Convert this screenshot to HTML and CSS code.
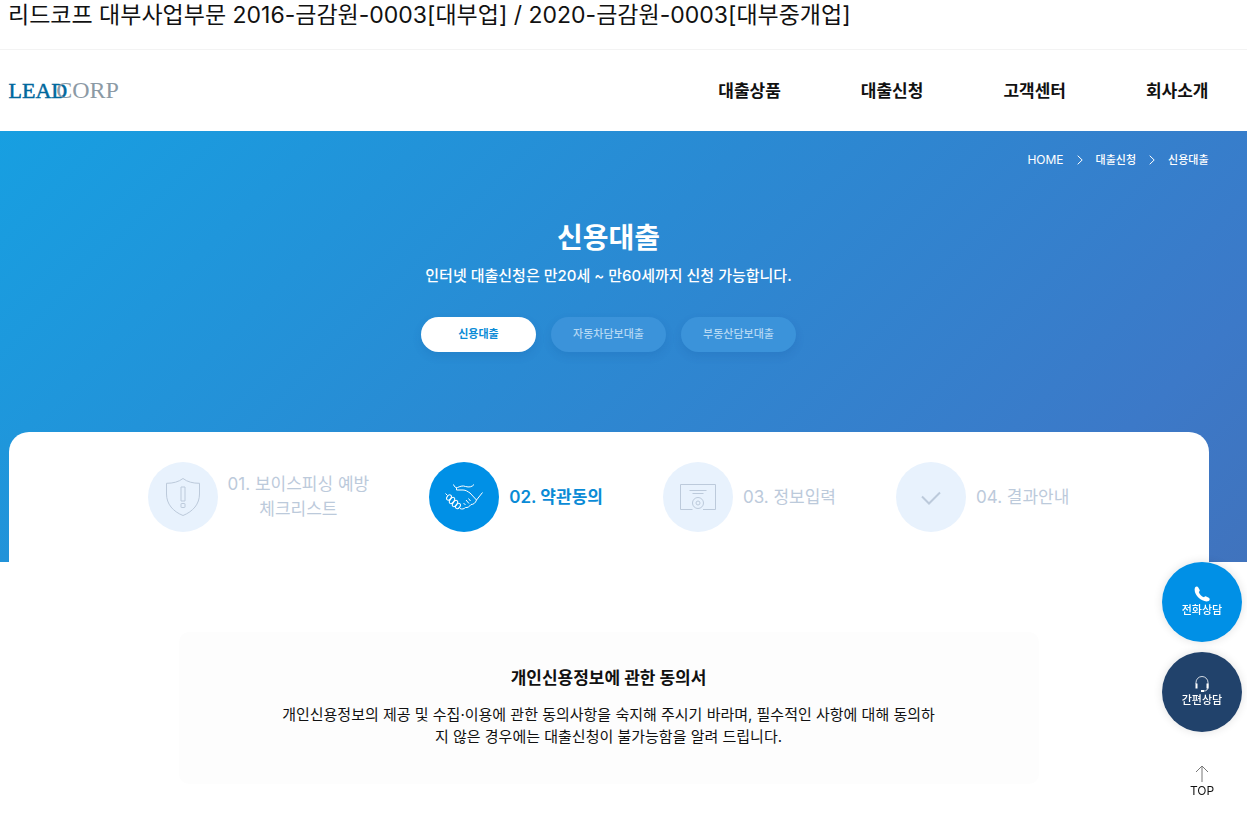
FILE: index.html
```html
<!DOCTYPE html>
<html lang="ko">
<head>
<meta charset="utf-8">
<meta name="viewport" content="width=device-width, initial-scale=1">
<title>신용대출 | 리드코프</title>
<link rel="stylesheet" href="styles.css">
</head>
<body>
<p class="notice">리드코프 대부사업부문 2016-금감원-0003[대부업] / 2020-금감원-0003[대부중개업]</p>

<header class="header">
  <div class="container header-row">
    <a class="logo" href="#"><span class="logo-lead">LEAD</span><span class="logo-corp">CORP</span></a>
    <nav class="nav">
      <a href="#">대출상품</a>
      <a href="#">대출신청</a>
      <a href="#">고객센터</a>
      <a href="#">회사소개</a>
    </nav>
  </div>
</header>

<section class="hero">
  <div class="container">
    <nav class="crumbs">
      <a class="crumb-home" href="#">HOME</a>
      <svg width="6" height="10" viewBox="0 0 6 10"><path d="M.7.7 5.2 5 .7 9.3"/></svg>
      <a href="#">대출신청</a>
      <svg width="6" height="10" viewBox="0 0 6 10"><path d="M.7.7 5.2 5 .7 9.3"/></svg>
      <a href="#">신용대출</a>
    </nav>
    <h1 class="title">신용대출</h1>
    <p class="subtitle">인터넷 대출신청은 만20세 ~ 만60세까지 신청 가능합니다.</p>
    <div class="tabs">
      <a class="tab tab-on" href="#">신용대출</a>
      <a class="tab" href="#">자동차담보대출</a>
      <a class="tab" href="#">부동산담보대출</a>
    </div>
    <ol class="steps">
      <li class="step">
        <span class="step-icon">
          <svg width="36" height="40" viewBox="0 0 36 40"><path d="M18 1.5C13.5 5 8 6.3 1.500 6.300V17C1.500 27 8 34.500 18 38.500 28 34.500 34.500 27 34.500 17V6.300C28 6.300 22.500 5 18 1.500Z"/><path d="M16 10h4v14h-4zM16.500 26.500h3a.5.5 0 0 1 .5.500v3a.5.5 0 0 1-.5.500h-3a.5.5 0 0 1-.5-.5v-3a.5.5 0 0 1 .5-.5z"/></svg>
        </span>
        <span class="step-text">01. 보이스피싱 예방<br>체크리스트</span>
      </li>
      <li class="step step-on">
        <span class="step-icon">
          <svg width="40" height="30" viewBox="0 0 40 30"><path d="M9.500 2.500C10.500 5 11.500 6 13.500 5.500 17 4 19 3.500 21.500 4.500 25 5.500 28 5 30 2.500M12.500 6v2h6.500c3 0 4.500 1.500 7 3l6.500 7L38.500 10.500"/><path d="M32.500 18c-1 3-3 4.500-5.500 4.500-1.500 2-3.500 3.500-5.500 3-1.500 1.500-3.500 2-5.500 1M19.500 21l2 2M22 18l3 3.500M24.500 16.500l2 2.500M1.500 11.500 3.500 13.500"/><ellipse cx="5" cy="15.500" rx="2" ry="3" transform="rotate(35 5 15.500)"/><ellipse cx="8" cy="18.500" rx="2" ry="3.500" transform="rotate(35 8 18.500)"/><ellipse cx="11" cy="21.500" rx="2" ry="3.500" transform="rotate(35 11 21.500)"/><ellipse cx="14" cy="24" rx="2" ry="3" transform="rotate(35 14 24)"/></svg>
        </span>
        <span class="step-text">02. 약관동의</span>
      </li>
      <li class="step">
        <span class="step-icon">
          <svg width="36" height="28" viewBox="0 0 36 28"><path d="M12.500 26.500H.5V1.500h35v25H23M9.500 7.500h17M12.500 10.500h11"/><circle cx="18" cy="20" r="5.500"/><circle cx="18" cy="20" r="2"/></svg>
        </span>
        <span class="step-text">03. 정보입력</span>
      </li>
      <li class="step">
        <span class="step-icon">
          <svg class="check" width="20" height="14" viewBox="0 0 20 14"><path d="M1 5.500 8 12.500 19 1.500"/></svg>
        </span>
        <span class="step-text">04. 결과안내</span>
      </li>
    </ol>
  </div>
</section>

<main class="content">
  <section class="agree">
    <h2>개인신용정보에 관한 동의서</h2>
    <p>개인신용정보의 제공 및 수집·이용에 관한 동의사항을 숙지해 주시기 바라며, 필수적인 사항에 대해 동의하지 않은 경우에는 대출신청이 불가능함을 알려 드립니다.</p>
  </section>
</main>

<aside class="quick">
  <a class="quick-item quick-call" href="#">
    <svg width="16" height="16" viewBox="0 0 16 16"><path fill="#fff" d="M1 1.500C2 .2 3.600.2 4.300 1.400L5.700 4C6 4.800 5.400 5.400 4.800 6 5.600 8.500 7.500 10.400 10 11.300 10.700 10.500 11.300 10 12.200 10.400L14.800 11.800C16.200 12.700 15.800 14 14.800 15 9 17.500-1.500 9 1 1.500Z"/></svg>
    전화상담
  </a>
  <a class="quick-item quick-simple" href="#">
    <svg width="16" height="16" viewBox="0 0 16 16"><path fill="none" stroke="#fff" stroke-opacity=".8" d="M2 8V6.500a6 6 0 0 1 12 0V11c0 2.500-1.500 4-4 4"/><path fill="none" stroke="#fff" stroke-width="2" d="M2.500 7.500v5M13.500 7.500v5M7 15h3"/></svg>
    간편상담
  </a>
  <a class="quick-top" href="#">
    <svg width="14" height="17" viewBox="0 0 14 17"><path fill="none" stroke="#777" d="M7 17V1M1 7l6-6 6 6"/></svg>
    TOP
  </a>
</aside>
</body>
</html>
```
FILE: styles.css
```css
* { box-sizing: border-box; }
body {
  margin: 0;
  background: #fff;
  color: #111;
  font-family: Inter, "Noto Sans CJK KR", sans-serif;
  font-size: 15px;
}
a { color: inherit; text-decoration: none; }
h1, h2, p, ol { margin: 0; padding: 0; }

.notice {
  height: 50px;
  padding-left: 8px;
  border-bottom: 1px solid #f3f3f3;
  font-size: 23px;
  line-height: 30px;
}

.header, .hero, .content { padding-right: 30px; }
.container { max-width: 1200px; margin: 0 auto; }

.header-row {
  display: flex;
  align-items: center;
  justify-content: space-between;
  height: 81px;
}
.logo { display: flex; align-items: baseline; font-family: "Liberation Serif", serif; line-height: 24px; }
.logo-lead { color: #00689d; font-size: 22px; -webkit-text-stroke: 0.5px #00689d; }
.logo-corp { margin-left: -11px; color: #8c9aa5; font-size: 24px; }
.nav { display: flex; gap: 80px; font-size: 17px; font-weight: 700; line-height: 26px; }

.hero {
  background: linear-gradient(135deg, #179fe1 0%, #2a8ad3 45%, #3c79c8 85%, #4073bd 100%);
  color: #fff;
  text-align: center;
}
.crumbs {
  display: flex;
  justify-content: flex-end;
  align-items: center;
  gap: 13px;
  padding-top: 20px;
  font-size: 11px;
  font-weight: 500;
  line-height: 18px;
}
.crumb-home { font-size: 12px; font-weight: 400; }
.crumbs svg { fill: none; stroke: #fff; }
.title { margin-top: 47px; font-size: 28px; font-weight: 700; line-height: 44px; }
.subtitle { margin-top: 4px; font-weight: 500; line-height: 24px; }
.tabs { display: flex; justify-content: center; gap: 15px; margin-top: 29px; }
.tab {
  width: 115px;
  border-radius: 18px;
  background: #3b93da;
  box-shadow: 0 4px 10px rgba(0, 60, 130, 0.12);
  color: #b4d8f4;
  font-size: 11px;
  font-weight: 500;
  line-height: 35px;
}
.tab-on { background: #fff; color: #0a8bd6; font-weight: 600; }

.steps {
  display: flex;
  justify-content: center;
  gap: 60px;
  margin-top: 80px;
  padding: 30px 0;
  border-radius: 20px 20px 0 0;
  background: #fff;
  list-style: none;
}
.step {
  display: flex;
  align-items: center;
  gap: 10px;
  color: #bccadb;
  font-size: 17px;
  font-weight: 400;
  line-height: 25px;
}
.step-icon {
  display: flex;
  align-items: center;
  justify-content: center;
  width: 70px;
  height: 70px;
  border-radius: 50%;
  background: #e8f2fd;
}
.step-icon svg { fill: none; stroke: #bccadb; }
.step-icon .check { margin-top: 2px; stroke-width: 2; }
.step-on { color: #0a8bd6; font-weight: 600; }
.step-on .step-icon { background: #0090e6; }
.step-on .step-icon svg { stroke: #fff; }

.content { padding-top: 70px; padding-bottom: 33px; }
.agree {
  max-width: 860px;
  margin: 0 auto;
  padding: 33px 100px 36px;
  border-radius: 10px;
  background: #fdfdfd;
  text-align: center;
}
.agree h2 { font-size: 17px; font-weight: 700; line-height: 26px; }
.agree p { margin-top: 13px; line-height: 22px; word-break: break-all; }

.quick {
  position: fixed;
  right: 5px;
  bottom: 18px;
  display: flex;
  flex-direction: column;
  align-items: center;
  gap: 10px;
}
.quick-item {
  display: flex;
  flex-direction: column;
  align-items: center;
  justify-content: center;
  width: 80px;
  height: 80px;
  border-radius: 50%;
  box-shadow: 0 0 10px rgba(0, 0, 0, 0.12);
  color: #fff;
  font-size: 11px;
  font-weight: 500;
  line-height: 16px;
}
.quick-call { background: #0090e6; }
.quick-simple { background: #21426b; }
.quick-top {
  display: flex;
  flex-direction: column;
  align-items: center;
  margin-top: 23px;
  font-size: 12px;
  line-height: 17px;
}
```
